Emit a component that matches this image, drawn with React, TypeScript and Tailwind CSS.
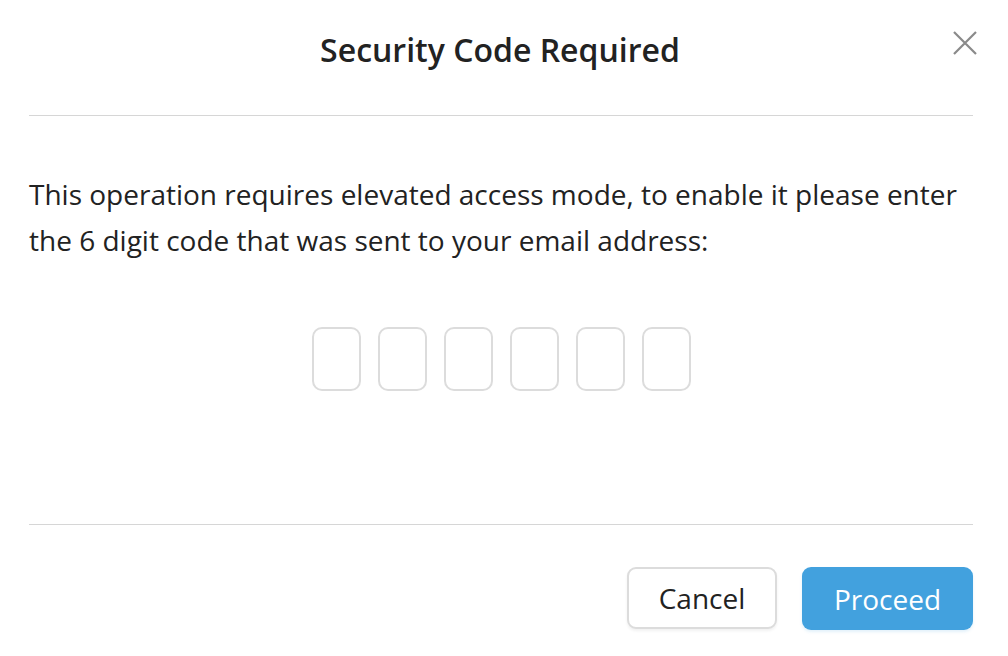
export default function App() {
  return (
    <div className="w-[1008px] h-[656px] bg-white flex flex-col pl-[29px] pr-[35px] text-[#222]" style={{ fontFamily: '"Open Sans", sans-serif' }}>
      {/* header */}
      <div className="relative h-[116px] flex items-center justify-center border-b border-[#d6d6d6]">
        <h1 className="text-[32px] font-semibold pb-[16px] pr-[2px]">Security Code Required</h1>
        <button className="absolute right-[-4px] top-[31px] w-[24px] h-[24px] text-[#8a8a8a]">
          <svg viewBox="0 0 24 24" width="24" height="24" stroke="currentColor" strokeWidth="2.2" fill="none">
            <path d="M1 1 L23 23 M23 1 L1 23" />
          </svg>
        </button>
      </div>

      {/* body */}
      <div className="h-[409px] border-b border-[#d6d6d6] pt-[55px]">
        <p className="text-[28px] leading-[46px]">
          This operation requires elevated access mode, to enable it please enter the 6 digit code that was sent to your email address:
        </p>
        <div className="flex justify-center gap-[17px] mt-[64px]">
          {[...Array(6)].map((_, i) => (
            <input
              key={i}
              maxLength={1}
              className="w-[49px] h-[64px] rounded-[10px] border-2 border-[#dcdcdc] text-center text-[24px] outline-none"
            />
          ))}
        </div>
      </div>

      {/* footer */}
      <div className="flex justify-end gap-[25px] pt-[42px]">
        <button className="w-[150px] h-[62px] rounded-[9px] border-2 border-[#dcdcdc] bg-white text-[28px] shadow-[0_2px_3px_rgba(0,0,0,0.06)]">
          Cancel
        </button>
        <button className="w-[171px] h-[63px] rounded-[9px] bg-[#42a1de] text-white text-[28px] shadow-[0_2px_3px_rgba(66,161,222,0.15)]">
          Proceed
        </button>
      </div>
    </div>
  );
}
